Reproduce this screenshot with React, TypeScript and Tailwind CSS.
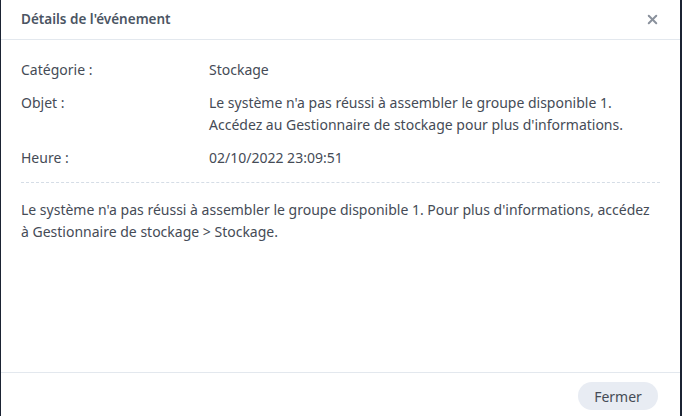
import { X } from "lucide-react";

const rows = [
  { label: "Catégorie :", value: ["Stockage"] },
  {
    label: "Objet :",
    value: [
      "Le système n'a pas réussi à assembler le groupe disponible 1.",
      "Accédez au Gestionnaire de stockage pour plus d'informations.",
    ],
  },
  { label: "Heure :", value: ["02/10/2022 23:09:51"] },
];

export default function App() {
  return (
    <div className="flex h-[416px] w-[682px] bg-[#1b2333] pl-px pr-[2px] font-['Noto_Sans',sans-serif] text-[14px] text-[#454b56]">
      <div className="flex flex-1 flex-col bg-white">
        <header className="flex h-[40px] items-center justify-between border-b border-[#e3e8ee] pl-[20px] pr-[20px]">
          <h1 className="text-[13.5px] font-semibold text-[#4b5563]">Détails de l'événement</h1>
          <X className="h-[15px] w-[15px] text-[#8a919c]" strokeWidth={3.2} />
        </header>

        <div className="flex flex-1 flex-col px-[20px] pt-[19px]">
          <div className="flex flex-col gap-[11px] pb-[13px]">
            {rows.map((row) => (
              <div key={row.label} className="flex leading-[22px]">
                <span className="w-[188px] shrink-0">{row.label}</span>
                <div>
                  {row.value.map((line) => (
                    <div key={line}>{line}</div>
                  ))}
                </div>
              </div>
            ))}
          </div>
          <div className="border-t border-dashed border-[#d5dde6]" />
          <p className="pt-[16px] leading-[22px]">
            Le système n'a pas réussi à assembler le groupe disponible 1. Pour plus d'informations, accédez
            <br />à Gestionnaire de stockage &gt; Stockage.
          </p>
        </div>

        <footer className="flex h-[44px] items-center justify-end border-t border-[#e3e8ee] pr-[22px]">
          <button className="mt-[3px] h-[28px] w-[80px] rounded-full bg-[#e8ecf3] text-[#454b56]">Fermer</button>
        </footer>
      </div>
    </div>
  );
}
